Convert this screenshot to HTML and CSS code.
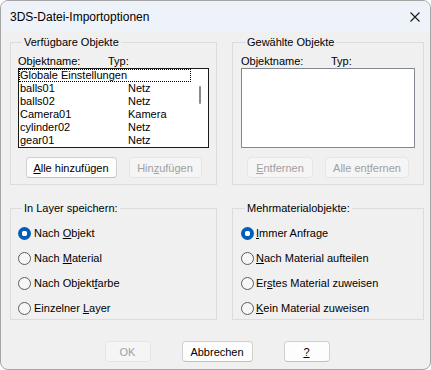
FILE: index.html
```html
<!DOCTYPE html>
<html lang="de">
<head>
    <meta charset="UTF-8" />
    <title>3DS-Datei-Importoptionen</title>
    <link rel="stylesheet" href="styles.css">
</head>
<body>
    <div class="window">
        <div class="titlebar">
            <span class="title">3DS-Datei-Importoptionen</span>
            <svg class="close" width="10" height="10" viewBox="0 0 10 10">
                <path d="M0.5 0.5 L9.5 9.5 M9.5 0.5 L0.5 9.5" stroke="#1a1a1a" stroke-width="1.1" fill="none" />
            </svg>
        </div>

        <div class="content">
            <div class="groups">
                <fieldset class="group">
                    <legend>Verfügbare Objekte</legend>
                    <div class="cols"><span>Objektname:</span><span>Typ:</span></div>
                    <div class="list focused">
                        <div class="items">
                            <div class="row current"><span>Globale Einstellungen</span></div>
                            <div class="row"><span>balls01</span><span>Netz</span></div>
                            <div class="row"><span>balls02</span><span>Netz</span></div>
                            <div class="row"><span>Camera01</span><span>Kamera</span></div>
                            <div class="row"><span>cylinder02</span><span>Netz</span></div>
                            <div class="row"><span>gear01</span><span>Netz</span></div>
                        </div>
                        <div class="scrollbar"><div class="thumb"></div></div>
                    </div>
                    <div class="btn-row">
                        <button class="btn btn-add-all"><u>A</u>lle hinzufügen</button>
                        <button class="btn btn-add" disabled>Hin<u>z</u>ufügen</button>
                    </div>
                </fieldset>

                <fieldset class="group group-right">
                    <legend>Gewählte Objekte</legend>
                    <div class="cols"><span>Objektname:</span><span>Typ:</span></div>
                    <div class="list"></div>
                    <div class="btn-row">
                        <button class="btn btn-remove" disabled><u>E</u>ntfernen</button>
                        <button class="btn btn-remove-all" disabled>Alle en<u>t</u>fernen</button>
                    </div>
                </fieldset>

                <fieldset class="group options">
                    <legend>In Layer speichern:</legend>
                    <div class="radio checked"><span class="dot"></span><span>Nach <u>O</u>bjekt</span></div>
                    <div class="radio"><span class="dot"></span><span>Nach <u>M</u>aterial</span></div>
                    <div class="radio"><span class="dot"></span><span>Nach Objekt<u>f</u>arbe</span></div>
                    <div class="radio"><span class="dot"></span><span>Einzelner <u>L</u>ayer</span></div>
                </fieldset>

                <fieldset class="group group-right options">
                    <legend>Mehrmaterialobjekte:</legend>
                    <div class="radio checked"><span class="dot"></span><span><u>I</u>mmer Anfrage</span></div>
                    <div class="radio"><span class="dot"></span><span><u>N</u>ach Material aufteilen</span></div>
                    <div class="radio"><span class="dot"></span><span>Er<u>s</u>tes Material zuweisen</span></div>
                    <div class="radio"><span class="dot"></span><span><u>K</u>ein Material zuweisen</span></div>
                </fieldset>
            </div>

            <div class="actions">
                <button class="btn btn-ok" disabled>OK</button>
                <button class="btn btn-cancel">Abbrechen</button>
                <button class="btn btn-help"><u>?</u></button>
            </div>
        </div>
    </div>
</body>
</html>
```

FILE: styles.css
```css
body {
    margin: 0;
    background: #ffffff;
    font-family: 'Liberation Sans', Arial, sans-serif;
    font-size: 11px;
    color: #000;
}

.window {
    width: 431px;
    height: 370px;
    box-sizing: border-box;
    border: 1px solid #a5a5a5;
    border-radius: 8px;
    background: #f0f0f0;
    overflow: hidden;
}

.titlebar {
    height: 31px;
    background: #eef3f9;
    display: flex;
    align-items: center;
    justify-content: space-between;
    padding: 0 10px 0 9px;
}
.title { font-size: 12px; }
.close { display: block; }

.content { padding: 3px 6px 0 9px; }

.groups {
    display: grid;
    grid-template-columns: 207px 192px;
    column-gap: 15px;
    row-gap: 16px;
}

.group {
    margin: 0;
    padding: 6px 7px 6px;
    border: 1px solid #dcdcdc;
    min-width: 0;
}
.group-right { padding-left: 8px; padding-right: 8px; }
.group legend {
    padding: 0 2px;
    margin-left: 4px;
    line-height: 14px;
}

.cols {
    display: grid;
    grid-template-columns: 90px auto;
    line-height: 13px;
}

.list {
    height: 80px;
    box-sizing: border-box;
    border: 1px solid #828790;
    background: #ffffff;
    display: flex;
}
.list.focused { border-color: #1a1a1a; }

.items { flex: 1; }
.row {
    display: grid;
    grid-template-columns: 108px auto;
    height: 13px;
    line-height: 13px;
    padding-left: 1px;
    box-sizing: border-box;
}
.row.current {
    outline: 1px dotted #000;
    outline-offset: -1px;
}

.scrollbar { width: 17px; }
.thumb {
    width: 2px;
    height: 18px;
    margin: 17px 0 0 8px;
    background: #8a8a8a;
    border-radius: 1px;
}

.btn-row {
    display: flex;
    justify-content: center;
    gap: 12px;
    margin-top: 9px;
}

.btn {
    height: 21px;
    box-sizing: border-box;
    font-family: inherit;
    font-size: 11px;
    color: #000;
    background: #fdfdfd;
    border: 1px solid #d0d0d0;
    border-bottom-color: #c0c0c0;
    border-radius: 4px;
    padding: 0;
}
.btn:disabled {
    color: #a0a0a0;
    background: #f5f5f5;
    border-color: #e5e5e5;
}
.btn-add-all { width: 91px; }
.btn-add { width: 73px; }
.btn-remove { width: 66px; }
.btn-remove-all { width: 84px; }

.options { padding-top: 12px; padding-bottom: 4px; }
.options .radio + .radio { margin-top: 12px; }

.radio {
    display: flex;
    align-items: center;
    gap: 3px;
    line-height: 13px;
}
.group-right .radio { gap: 2px; }
.dot {
    width: 13px;
    height: 13px;
    box-sizing: border-box;
    border: 1px solid #5c5c5c;
    border-radius: 50%;
    background: #f7f7f7;
}
.radio.checked .dot {
    border: none;
    background: radial-gradient(circle, #ffffff 0 2.6px, #005fb8 3px);
}

.actions {
    display: flex;
    justify-content: center;
    gap: 31px;
    margin-top: 21px;
}
.btn-ok, .btn-help { width: 46px; }
.btn-cancel { width: 71px; }
```
